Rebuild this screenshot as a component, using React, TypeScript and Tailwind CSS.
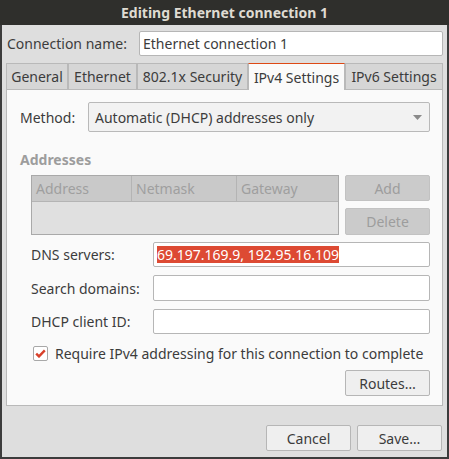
import React from "react";

const font = { fontFamily: '"Noto Sans", "Open Sans", sans-serif' };

function Tab({ label, w, active }: { label: string; w: number; active?: boolean }) {
  return (
    <div
      className={
        active
          ? "flex h-[27px] items-center justify-center border-x border-t border-[#b9b9b9] border-t-[#dd4814] bg-[#fafafa] text-[#3c3c3c]"
          : "flex h-[27px] items-center justify-center border-x border-t border-b border-[#b9b9b9] bg-[#d6d6d6] text-[#3c3c3c]"
      }
      style={{ width: w }}
    >
      {label}
    </div>
  );
}

export default function App() {
  return (
    <div className="w-[449px] h-[459px] flex flex-col bg-[#dedede] text-[14px] text-[#3c3c3c]" style={font}>
      <div className="h-[25px] shrink-0 bg-[#2f2f2c] flex items-center justify-center text-[#dfdbd2] font-bold text-[14px]">
        Editing Ethernet connection 1
      </div>
      <div className="flex-1 flex flex-col border-x-2 border-b-2 border-[#3c3c3c] px-[4px] pt-[6px]">
        <div className="flex items-center h-[25px]">
          <div className="pl-[1px] w-[133px]">Connection name:</div>
          <div className="flex-1 h-[25px] bg-white border border-[#b6b6b6] rounded-[2px] flex items-center px-[3px] text-[#3c3c3c]">
            Ethernet connection 1
          </div>
        </div>
        <div className="mt-[7px] flex">
          <Tab label="General" w={62} />
          <Tab label="Ethernet" w={69} />
          <Tab label="802.1x Security" w={111} />
          <Tab label="IPv4 Settings" w={97} active />
          <Tab label="IPv6 Settings" w={98} />
        </div>
        <div className="h-[316px] bg-[#fafafa] border-x border-b border-[#b9b9b9] flex flex-col pl-[13px] pr-[12px] pt-[12px]">
          <div className="flex items-center h-[30px]">
            <div className="w-[68px]">Method:</div>
            <div className="flex-1 h-[30px] bg-[#f2f2f2] border border-[#b9b9b9] rounded-[2px] flex items-center px-[6px]">
              <span className="flex-1">Automatic (DHCP) addresses only</span>
              <svg width="9" height="5" viewBox="0 0 9 5" className="mr-[1px]">
                <path d="M0 0 L9 0 L4.5 5 Z" fill="#8a8a8a" />
              </svg>
            </div>
          </div>
          <div className="mt-[16px] font-bold text-[#9d9d9d] h-[22px] flex items-center">Addresses</div>
          <div className="mt-[5px] flex pl-[11px]">
            <div className="w-[308px] h-[60px] border border-[#a9a9a9] bg-[#e0e0e0] flex flex-col text-[#9f9f9f]">
              <div className="h-[26px] bg-[#c9c9c9] border-b border-[#b4b4b4] flex">
                <div className="w-[100px] border-r border-[#b4b4b4] flex items-center pl-[4px]">Address</div>
                <div className="w-[105px] border-r border-[#b4b4b4] flex items-center pl-[4px]">Netmask</div>
                <div className="flex-1 flex items-center pl-[4px]">Gateway</div>
              </div>
            </div>
            <div className="ml-[6px] flex-1 flex flex-col gap-[7px]">
              <div className="h-[26px] bg-[#cbcbcb] border border-[#c2c2c2] rounded-[2px] flex items-center justify-center text-[#9d9d9d]">Add</div>
              <div className="h-[27px] bg-[#cbcbcb] border border-[#c2c2c2] rounded-[2px] flex items-center justify-center text-[#9d9d9d]">Delete</div>
            </div>
          </div>
          <div className="mt-[7px] pl-[11px] flex flex-col gap-[8px]">
            <div className="flex items-center h-[25px]">
              <div className="w-[122px]">DNS servers:</div>
              <div className="flex-1 h-[25px] bg-white border border-[#b6b6b6] rounded-[2px] flex items-center px-[3px]">
                <span className="bg-[#dd4a33] text-white leading-[17px]">69.197.169.9, 192.95.16.109</span>
              </div>
            </div>
            <div className="flex items-center h-[26px]">
              <div className="w-[122px]">Search domains:</div>
              <div className="flex-1 h-[26px] bg-white border border-[#b6b6b6] rounded-[2px]" />
            </div>
            <div className="flex items-center h-[25px]">
              <div className="w-[122px]">DHCP client ID:</div>
              <div className="flex-1 h-[25px] bg-white border border-[#b6b6b6] rounded-[2px]" />
            </div>
          </div>
          <div className="mt-[11px] pl-[13px] flex items-center h-[16px]">
            <div className="w-[15px] h-[15px] border border-[#a8a8a8] rounded-[2px] bg-white flex items-center justify-center">
              <svg width="11" height="9" viewBox="0 0 11 9">
                <path d="M1.2 4.6 L4 7.4 L9.8 1.4" fill="none" stroke="#d8402b" strokeWidth="2.4" strokeLinejoin="miter" />
              </svg>
            </div>
            <span className="ml-[7px]">Require IPv4 addressing for this connection to complete</span>
          </div>
          <div className="mt-[9px] flex justify-end">
            <div className="w-[85px] h-[26px] bg-[#efefef] border border-[#b6b6b6] rounded-[2px] flex items-center justify-center">Routes…</div>
          </div>
        </div>
        <div className="mt-[19px] flex justify-end gap-[6px] pr-[1px]">
          <div className="w-[85px] h-[26px] bg-[#efefef] border border-[#b6b6b6] rounded-[2px] flex items-center justify-center">Cancel</div>
          <div className="w-[85px] h-[26px] bg-[#efefef] border border-[#b6b6b6] rounded-[2px] flex items-center justify-center">Save…</div>
        </div>
      </div>
    </div>
  );
}
